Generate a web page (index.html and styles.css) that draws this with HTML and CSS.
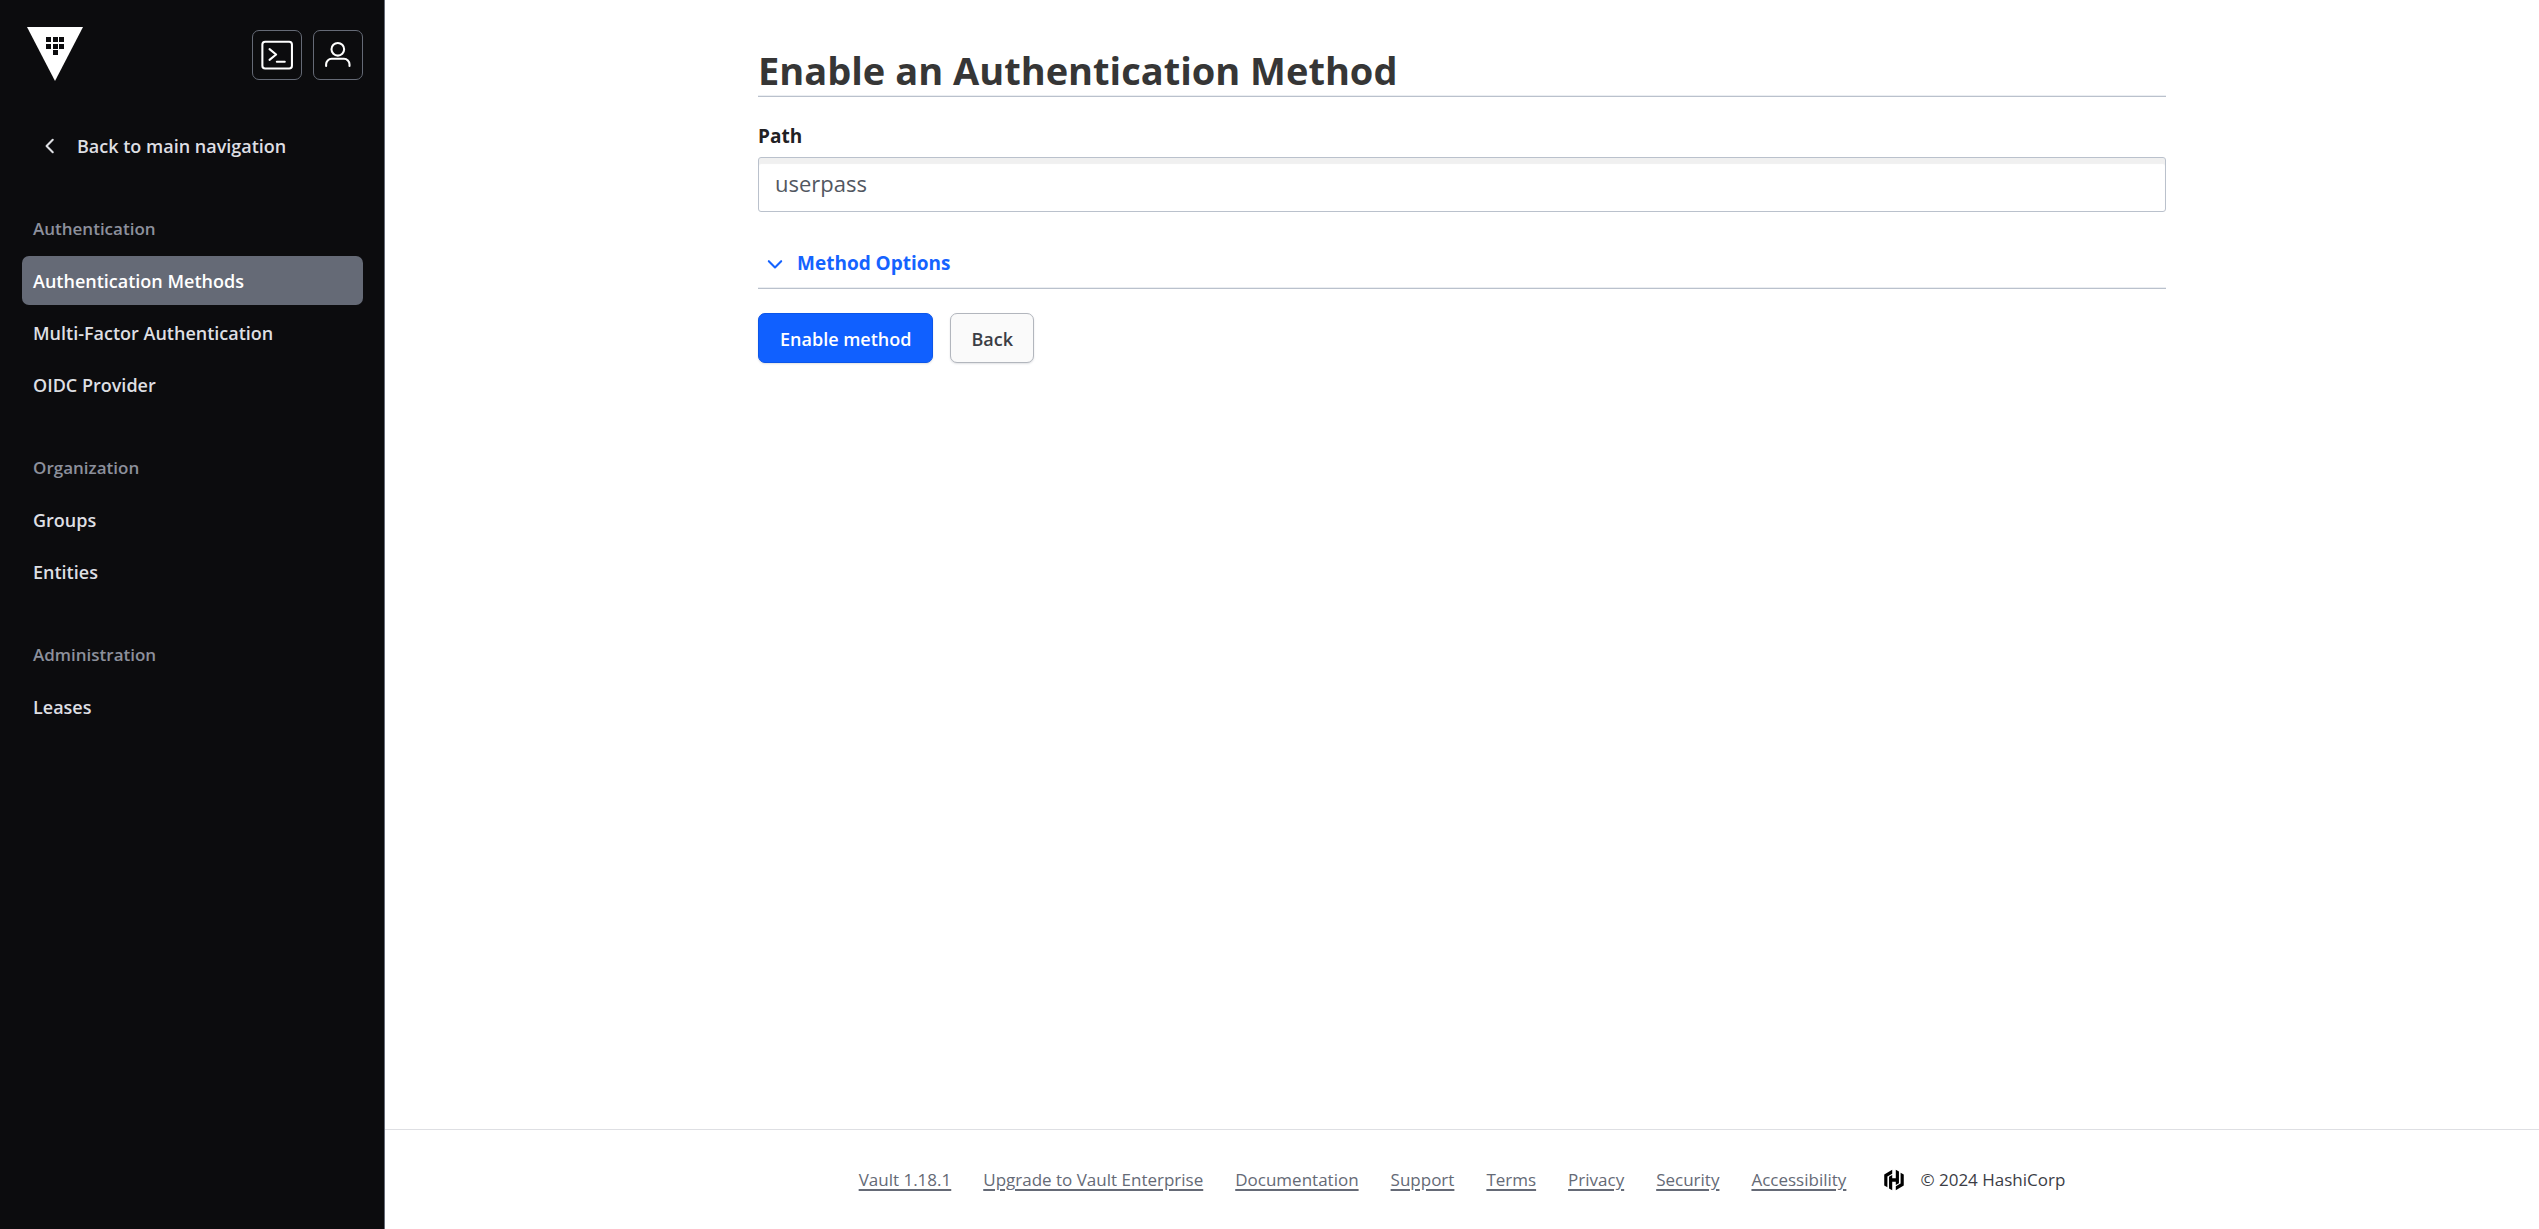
FILE: index.html
```html
<!DOCTYPE html>
<html lang="en">
<head>
<meta charset="utf-8">
<title>Vault</title>
<link rel="stylesheet" href="styles.css">
</head>
<body>
<div class="app">
  <aside class="sidebar">
    <div class="sidebar-header">
      <a class="logo" href="#" aria-label="Vault home">
        <svg width="56" height="54" viewBox="0 0 56 54" aria-hidden="true"><path fill="#fff" d="M0 0h56L28 54z"/><path fill="#0c0c0e" d="M19 10h5v5h-5zM26 10h5v5h-5zM32 10h5v5h-5zM19 17h5v5h-5zM26 17h5v5h-5zM32 17h5v5h-5zM26 23h5v5h-5z"/></svg>
      </a>
      <div class="header-actions">
        <button class="icon-button" type="button" aria-label="Console">
          <svg width="33" height="33" viewBox="0 0 24 24" fill="none" stroke="#fff" stroke-width="1.500" stroke-linecap="round" stroke-linejoin="round" aria-hidden="true"><rect x="1" y="2" width="21.500" height="19.500" rx="2"/><path d="M6.200 7.400l4.800 3.900-4.800 3.900M11.500 16.600h5.800"/></svg>
        </button>
        <button class="icon-button" type="button" aria-label="User menu">
          <svg width="33" height="33" viewBox="0 0 24 24" fill="none" stroke="#fff" stroke-width="1.500" stroke-linecap="round" aria-hidden="true"><circle cx="11.500" cy="7.500" r="4.600"/><path d="M3 19.600v-1.200a4 4 0 0 1 4-4h9a4 4 0 0 1 4 4v1.200"/></svg>
        </button>
      </div>
    </div>
    <nav class="nav" aria-label="Access">
      <a class="nav-back" href="#">
        <svg width="22" height="22" viewBox="0 0 16 16" fill="none" stroke="currentColor" stroke-width="1.500" stroke-linecap="round" stroke-linejoin="round" aria-hidden="true"><path d="M10 3.500L5.500 8l4.500 4.500"/></svg>
        Back to main navigation
      </a>
      <section class="nav-group">
        <h2 class="nav-title">Authentication</h2>
        <a class="nav-link nav-link-active" href="#" aria-current="page">Authentication Methods</a>
        <a class="nav-link" href="#">Multi-Factor Authentication</a>
        <a class="nav-link" href="#">OIDC Provider</a>
      </section>
      <section class="nav-group">
        <h2 class="nav-title">Organization</h2>
        <a class="nav-link" href="#">Groups</a>
        <a class="nav-link" href="#">Entities</a>
      </section>
      <section class="nav-group">
        <h2 class="nav-title">Administration</h2>
        <a class="nav-link" href="#">Leases</a>
      </section>
    </nav>
  </aside>
  <div class="page">
    <main class="content">
      <h1 class="title">Enable an Authentication Method</h1>
      <form class="form">
        <label class="label" for="path">Path</label>
        <input class="input" id="path" type="text" value="userpass">
        <div class="options">
          <button class="options-toggle" type="button" aria-expanded="false">
            <svg width="22" height="22" viewBox="0 0 16 16" fill="none" stroke="currentColor" stroke-width="1.500" stroke-linecap="round" stroke-linejoin="round" aria-hidden="true"><path d="M3.500 6.700L8 11.200l4.500-4.500"/></svg>
            Method Options
          </button>
        </div>
        <div class="actions">
          <button class="button button-primary" type="submit">Enable method</button>
          <button class="button button-secondary" type="button">Back</button>
        </div>
      </form>
    </main>
    <footer class="footer">
      <a href="#">Vault 1.18.1</a>
      <a href="#">Upgrade to Vault Enterprise</a>
      <a href="#">Documentation</a>
      <a href="#">Support</a>
      <a href="#">Terms</a>
      <a href="#">Privacy</a>
      <a href="#">Security</a>
      <a href="#">Accessibility</a>
      <span class="legal">
        <svg width="22" height="22" viewBox="0 0 16 16" aria-hidden="true"><path d="M6.700 .6L.9 4v8l2.300 1.300V5.400l3.500-2zM9.300 .6v6.200H6.700V4.400L4.400 5.700v8.400l2.300 1.300V9.200h2.600v2.400l2.300-1.300V1.900zM12.800 2.700v7.900l-3.500 2v2.800l5.800-3.400V4z"/></svg>
        © 2024 HashiCorp
      </span>
    </footer>
  </div>
</div>
</body>
</html>
```
FILE: styles.css
```css
* {
  box-sizing: border-box;
}

body {
  margin: 0;
  background: #fff;
  color: #3b3d45;
  font-family: "Open Sans", "Noto Sans", sans-serif;
  font-size: 18px;
  line-height: 26px;
}

button,
input {
  font: inherit;
}

button {
  cursor: pointer;
}

.app {
  display: flex;
  min-height: 100vh;
}

.sidebar {
  flex: none;
  width: 385px;
  padding: 27px 21px 24px 22px;
  border-right: 1px solid #656a76;
  background: #0c0c0e;
}

.sidebar-header {
  display: flex;
  align-items: flex-start;
  justify-content: space-between;
  padding-left: 5px;
}

.logo svg {
  display: block;
}

.header-actions {
  display: flex;
  gap: 11px;
  padding-top: 3px;
}

.icon-button {
  display: flex;
  align-items: center;
  justify-content: center;
  width: 50px;
  height: 50px;
  padding: 0;
  border: 1px solid #656a76;
  border-radius: 7px;
  background: transparent;
}

.nav {
  padding-top: 40px;
  font-weight: 600;
}

.nav-back,
.nav-link {
  display: flex;
  align-items: center;
  height: 49px;
  padding: 0 11px;
  border-radius: 7px;
  color: #dedfe3;
  text-decoration: none;
}

.nav-back {
  gap: 16px;
  padding-left: 17px;
}

.nav-group {
  display: flex;
  flex-direction: column;
  gap: 3px;
  padding-top: 33px;
}

.nav-title {
  margin: 0;
  padding: 13px 11px 11px;
  color: #8c909c;
  font-size: 17px;
  font-weight: 600;
  line-height: 26px;
}

.nav-link-active {
  background: #656a76;
  color: #fff;
}

.page {
  display: flex;
  flex: 1;
  flex-direction: column;
  min-width: 0;
}

.content {
  flex: 1;
  width: 100%;
  max-width: 1456px;
  margin: 0 auto;
  padding: 45px 24px 24px;
}

.title {
  margin: 0;
  padding-bottom: 1px;
  border-bottom: 1px solid #bac1cc;
  box-shadow: inset 0 -1px #ebeef2;
  color: #363636;
  font-size: 38px;
  font-weight: 700;
  line-height: 50px;
}

.form {
  padding-top: 26px;
}

.label {
  display: block;
  margin-bottom: 8px;
  color: #1f2124;
  font-size: 19px;
  font-weight: 700;
}

.input {
  display: block;
  width: 100%;
  height: 55px;
  padding: 0 16px 4px;
  border: 1px solid #bac1cc;
  border-radius: 3px;
  background: #fff;
  box-shadow: inset 0 6px 1px #f0f0f0;
  color: #525761;
  font-size: 22px;
}

.options {
  padding: 38px 0 12px;
  border-bottom: 1px solid #bac1cc;
  box-shadow: inset 0 -1px #ebeef2;
}

.options-toggle {
  display: flex;
  align-items: center;
  gap: 11px;
  padding: 0 6px;
  border: 0;
  background: none;
  color: #1563ff;
  font-size: 19px;
  font-weight: 700;
}

.actions {
  display: flex;
  gap: 17px;
  padding-top: 24px;
}

.button {
  height: 50px;
  padding: 2px 21px 0;
  border: 1px solid #0c56e9;
  border-radius: 7px;
  box-shadow: 0 1px 2px #656a7633;
  font-weight: 600;
}

.button-primary {
  background: #1060ff;
  color: #fff;
}

.button-secondary {
  padding: 2px 20px 0;
  border-color: #b2b6bd;
  background: #fafafa;
  color: #3b3d45;
}

.footer {
  display: flex;
  flex-wrap: wrap;
  align-items: center;
  justify-content: center;
  gap: 12px 32px;
  min-height: 100px;
  padding: 25px 24px 24px;
  border-top: 1px solid #dedfe3;
  font-size: 17px;
}

.footer a {
  color: #656a76;
  text-decoration-thickness: 2px;
  text-underline-offset: 3px;
}

.legal {
  display: flex;
  align-items: center;
  gap: 15px;
  padding-left: 5px;
}

.legal svg {
  fill: #000;
}
```
